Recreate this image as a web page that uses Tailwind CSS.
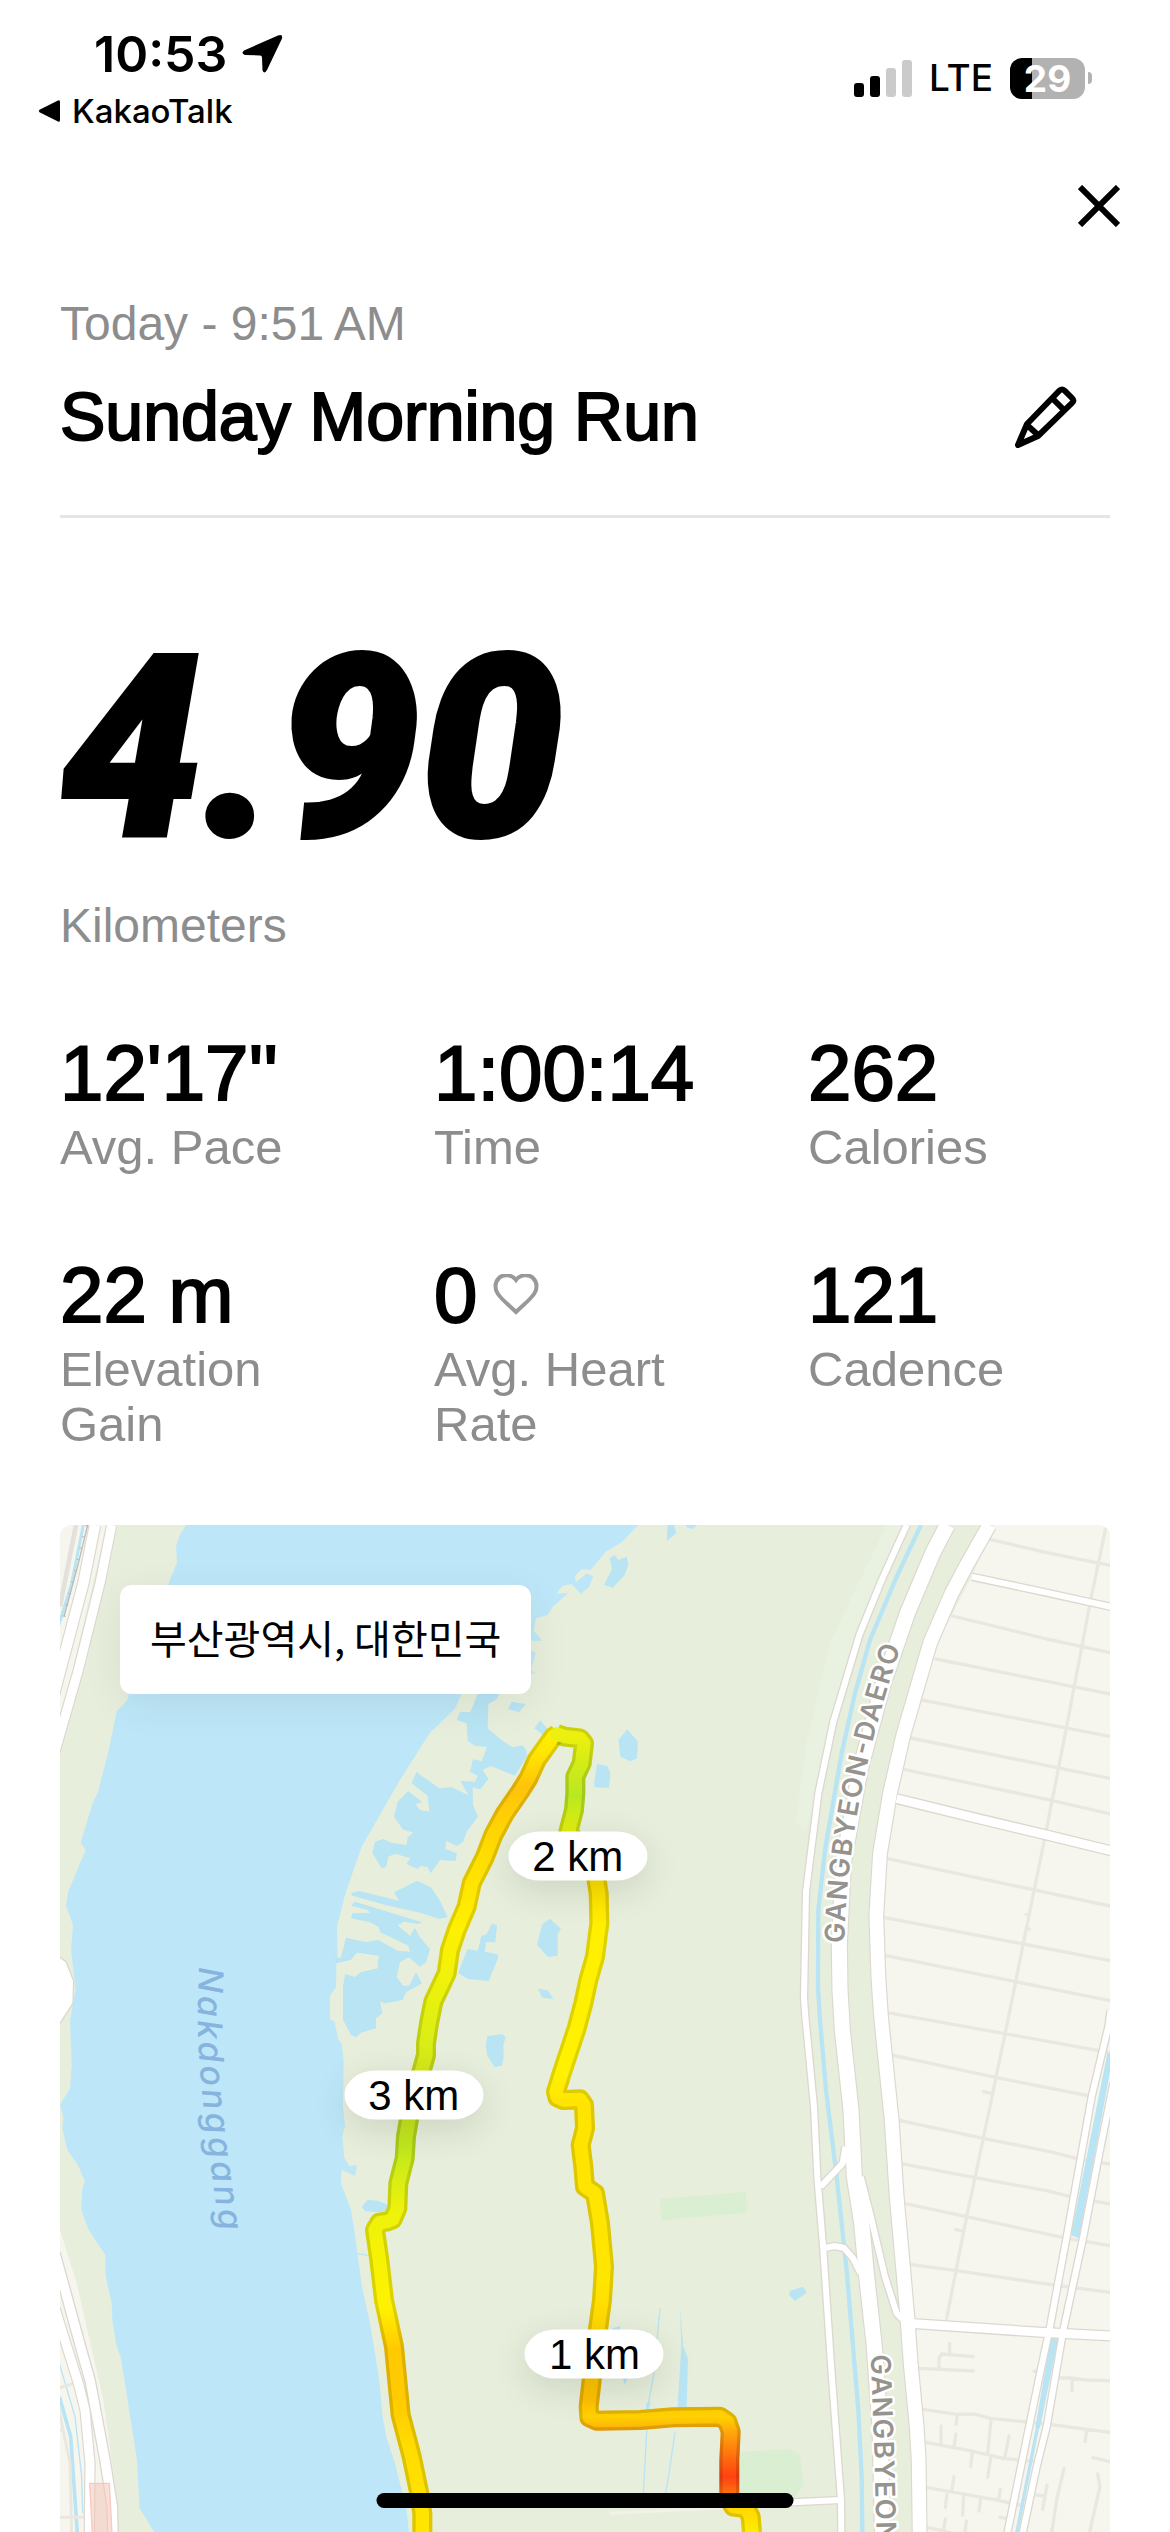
<!DOCTYPE html>
<html lang="en">
<head>
<meta charset="utf-8">
<meta name="viewport" content="width=device-width, initial-scale=1">
<title>Sunday Morning Run</title>
<script src="https://cdn.jsdelivr.net/npm/@tailwindcss/browser@4"></script>
</head>
<body class="bg-white text-black font-['Liberation_Sans',Arial,sans-serif]">
<div class="min-h-screen overflow-hidden">

  <!-- Status bar -->
  <header class="flex h-[150px] items-start justify-between pl-[38px] pr-[78px] pt-6 font-['Inter',sans-serif]">
    <div>
      <div class="flex items-center gap-[14px] pl-14">
        <span class="text-[50px] leading-[60px] font-semibold">10:53</span>
        <svg class="h-10 w-[42px]" viewBox="0 0 42 40" aria-label="Location in use"><path d="M37 1.500Q42 -.5 41 4.500L26 36Q23.500 40.500 21.500 36.500L21 23.500Q21 21.500 19 21.500L4 21Q-.5 19.500 3 16.500Z" fill="#000"/></svg>
      </div>
      <a href="#" class="mt-[7px] flex items-center gap-3 text-[33px] leading-10 font-medium">
        <svg class="h-6 w-[22px]" viewBox="0 0 22 24" aria-hidden="true"><path d="M20 1.500Q22 .5 22 3V21Q22 23.500 20 22.500L1.500 13.200Q0 12 1.500 10.800Z" fill="#000"/></svg>
        KakaoTalk
      </a>
    </div>
    <div class="mt-[33px] flex items-center gap-[17px]">
      <svg class="h-[38px] w-[58px]" viewBox="0 0 58 38" aria-label="Signal"><g fill="#000"><rect x="0" y="24" width="10" height="14" rx="3"/><rect x="16" y="17" width="10" height="21" rx="3"/></g><g fill="#cbcbcb"><rect x="32" y="9" width="10" height="29" rx="3"/><rect x="48" y="1" width="10" height="37" rx="3"/></g></svg>
      <span class="text-[37px] leading-[42px] font-medium">LTE</span>
      <div class="flex items-center gap-[3px]">
        <div class="flex h-[41px] w-[75px] items-center justify-center rounded-xl bg-linear-to-r from-black from-29% to-[#b2b2b2] to-29% text-[37px] leading-[41px] font-bold text-white">29</div>
        <div class="h-3 w-1 rounded-r-full bg-[#b2b2b2]"></div>
      </div>
    </div>
  </header>

  <div class="flex justify-end pr-[50px] pt-[35px]">
    <button type="button" aria-label="Close" class="size-[42px]">
      <svg class="size-[42px]" viewBox="0 0 42 42"><path d="M2 2L40 40M40 2L2 40" stroke="#000" stroke-width="6" fill="none"/></svg>
    </button>
  </div>

  <main class="px-[60px] pt-[69px]">
    <p class="text-[48px] leading-[55px] text-[#8d8d8d]">Today - 9:51&thinsp;AM</p>
    <div class="mt-[25px] flex items-center justify-between border-b-[3px] border-[#e5e5e5] pb-[59px] pr-[33px]">
      <h1 class="text-[68px] leading-20 [-webkit-text-stroke:2px_#000]">Sunday Morning Run</h1>
      <button type="button" aria-label="Edit title" class="size-16">
        <svg class="size-16" viewBox="0 0 64 64" fill="none" stroke="#000" stroke-width="6" stroke-linejoin="round"><path d="M46.500 6.500Q49 4.500 51.500 6.500L59 14Q61.500 16.500 59 19L25 52L5 61L14 40ZM39 14L51 26M14 41L25 51"/></svg>
      </button>
    </div>

    <section aria-label="Distance" class="mt-[130px]">
      <p class="font-['Roboto',sans-serif] text-[254px] leading-[200px] font-black italic [-webkit-text-stroke:4px_#000]">4.90</p>
      <p class="mt-[50px] text-[48px] leading-[55px] text-[#8d8d8d]">Kilometers</p>
    </section>

    <dl class="mt-20 grid grid-cols-3 gap-x-18 gap-y-20">
      <div>
        <dd class="text-[78px] leading-20 [-webkit-text-stroke:2px_#000]">12'17''</dd>
        <dt class="mt-[7px] text-[49px] leading-[55px] text-[#8d8d8d]">Avg. Pace</dt>
      </div>
      <div>
        <dd class="text-[78px] leading-20 [-webkit-text-stroke:2px_#000]">1:00:14</dd>
        <dt class="mt-[7px] text-[49px] leading-[55px] text-[#8d8d8d]">Time</dt>
      </div>
      <div>
        <dd class="text-[78px] leading-20 [-webkit-text-stroke:2px_#000]">262</dd>
        <dt class="mt-[7px] text-[49px] leading-[55px] text-[#8d8d8d]">Calories</dt>
      </div>
      <div>
        <dd class="text-[78px] leading-20 [-webkit-text-stroke:2px_#000]">22 m</dd>
        <dt class="mt-[7px] text-[49px] leading-[55px] text-[#8d8d8d]">Elevation Gain</dt>
      </div>
      <div>
        <dd class="flex items-center gap-4 text-[78px] leading-20 [-webkit-text-stroke:2px_#000]">0
          <svg class="h-[42px] w-[46px]" viewBox="0 0 46 42" aria-hidden="true"><path d="M23 6C19 0 10 0 6 4C1 9 2 16 5 20C9 26 17 32 23 38C29 32 37 26 41 20C44 16 45 9 40 4C36 0 27 0 23 6Z" fill="none" stroke="#999" stroke-width="4"/></svg>
        </dd>
        <dt class="mt-[7px] text-[49px] leading-[55px] text-[#8d8d8d]">Avg. Heart Rate</dt>
      </div>
      <div>
        <dd class="text-[78px] leading-20 [-webkit-text-stroke:2px_#000]">121</dd>
        <dt class="mt-[7px] text-[49px] leading-[55px] text-[#8d8d8d]">Cadence</dt>
      </div>
    </dl>

    <section aria-label="Route map" class="relative mt-[73px] overflow-hidden rounded-t-xl">
      <svg class="block w-full" viewBox="180 4575 3150 3021">
        <defs>
          <linearGradient id="outbound" gradientUnits="userSpaceOnUse" x1="0" y1="680" x2="0" y2="3080">
            <stop offset="0" stop-color="#ecf00e"/><stop offset=".05" stop-color="#c8ea1c"/><stop offset=".075" stop-color="#b9e81f"/><stop offset=".12" stop-color="#e6ee10"/><stop offset=".18" stop-color="#ffe000"/><stop offset=".24" stop-color="#fff000"/><stop offset=".42" stop-color="#fff200"/><stop offset=".46" stop-color="#ffe400"/><stop offset=".68" stop-color="#ffe600"/><stop offset=".75" stop-color="#ffd400"/><stop offset=".83" stop-color="#ffc000"/><stop offset=".85" stop-color="#ffd200"/><stop offset=".87" stop-color="#ffa60c"/><stop offset=".925" stop-color="#ff4210"/><stop offset=".95" stop-color="#ff7a10"/><stop offset=".965" stop-color="#ffd800"/><stop offset="1" stop-color="#fff200"/>
          </linearGradient>
          <linearGradient id="inbound" gradientUnits="userSpaceOnUse" x1="0" y1="650" x2="0" y2="3070">
            <stop offset="0" stop-color="#fff200"/><stop offset=".03" stop-color="#ffe800"/><stop offset=".075" stop-color="#ffc30a"/><stop offset=".15" stop-color="#ffdc00"/><stop offset=".25" stop-color="#fff000"/><stop offset=".32" stop-color="#eef20a"/><stop offset=".38" stop-color="#dcee14"/><stop offset=".46" stop-color="#cbe51c"/><stop offset=".52" stop-color="#c0e81f"/><stop offset=".6" stop-color="#eef20a"/><stop offset=".72" stop-color="#fff200"/><stop offset=".77" stop-color="#ffcb00"/><stop offset=".84" stop-color="#ffcc00"/><stop offset=".89" stop-color="#ffdc00"/><stop offset="1" stop-color="#ffe600"/>
          </linearGradient>
          <path id="leg-out" d="M710 672L735 680L780 685L792 700L785 760L766 800L766 850L762 900L745 965L800 1040L828 1100L836 1150L838 1240L825 1340L805 1410L790 1480L770 1555L745 1630L725 1690L708 1745L712 1762L730 1770L780 1768L792 1785L795 1855L782 1905L790 1970L795 2030L825 2050L840 2140L852 2270L846 2370L835 2450L815 2610L806 2690L808 2722L830 2732L960 2730L1060 2722L1200 2720L1222 2735L1232 2765L1228 2850L1228 2970L1240 2990L1278 2994L1292 3020L1297 3080"/>
          <path id="leg-in" d="M712 672L700 680L650 750L625 805L600 845L555 910L520 975L495 1040L455 1120L440 1190L410 1260L390 1320L380 1390L340 1475L327 1540L318 1600L318 1635L300 1700L275 1780L258 1880L254 1945L235 2020L232 2095L218 2128L200 2135L178 2138L165 2160L178 2250L192 2370L222 2510L237 2665L242 2715L275 2840L298 2950L307 3010L307 3080"/>
          <path id="daero-north" d="M433 1300C440 1000 500 700 620 360"/>
          <path id="daero-south" d="M512 2534L522 2800L545 3600"/>
          <path id="river-name" d="M477 1370C472 1500 472 1600 482 1700C494 1850 515 1990 548 2230"/>
        </defs>
        <rect x="180" y="4575" width="3150" height="3021" fill="#e7efdc"/>

        <!-- Riverside: west bank -->
        <g transform="translate(120 4530)">
          <path fill="#bde7f8" d="M438 45L418 78L408 108L411 157L385 222L300 400L266 552L262 570L230 604L205 725L174 845L157 882L122 998L137 1020L84 1146L78 1188L99 1245L93 1320L107 1440L99 1480L90 1530L95 1665L90 1735L60 1785L70 1820L67 1855L82 1920L115 1968L134 2014L126 2042L124 2100L145 2158L196 2236L197 2300L215 2380L217 2430L229 2505L243 2545L290 2845L299 2995L345 3070L1107 3070L1100 3000L1065 2860L1040 2785L1028 2720L1018 2610L990 2440L965 2325L945 2175L933 2100L903 2020L905 1980L945 1997L951 1965L928 1968L913 1943L907 1880L915 1847L909 1790L911 1650L905 1600L895 1588L883 1533L870 1528L870 1458L889 1430L889 1360L893 1343L891 1250L915 1155L965 1010L1080 810L1170 668L1245 596L1265 552L1400 540L1473 492L1486 488L1473 480L1480 455L1487 430L1473 420V392L1507 392L1481 362L1488 325L1523 315L1540 288L1585 250L1550 250L1568 228L1595 222L1622 252L1648 230L1660 198L1640 190L1608 217L1605 198L1625 178L1652 180L1697 125L1745 97L1795 45Z"/>
          <path fill="#b8e4f4" d="M889 1360L933 1350L951 1328L1016 1338L1012 1375L960 1387L945 1400L915 1392L909 1425V1530L933 1575L948 1582L963 1568L1008 1555V1525L1027 1510L1020 1475L1038 1480L1088 1470L1098 1447L1146 1420L1128 1387L1108 1427H1090L1070 1402L1080 1357L1106 1342L1140 1370L1158 1357L1170 1318L1137 1278L1125 1253L1110 1278L1073 1246L1092 1235L1135 1242L1146 1237L945 1175L933 1187L983 1200L990 1208L937 1210L933 1225L990 1237L1015 1250L1021 1267L1105 1307L1110 1325L1073 1322L1015 1290L977 1296L918 1283L903 1343L880 1343Z"/>
          <path fill="#e7efdc" d="M893 1360L933 1350L951 1328L1016 1338L1012 1375L960 1387L945 1400L915 1392L909 1425V1530L890 1545L883 1533L870 1528V1458L889 1430Z"/>
          <!-- Expressway and rail, north-west corner -->
          <path fill="#f6f6ef" d="M60 45H200L60 640Z"/>
          <g fill="none">
            <path d="M108 45L60 290" stroke="#e4e1db" stroke-width="14"/>
            <path d="M130 45L95 220L55 350" stroke="#b8e4f4" stroke-width="9"/>
            <path d="M215 45L180 220L115 480L42 735" stroke="#dcd8d0" stroke-width="34"/>
            <path d="M215 45L180 220L115 480L42 735" stroke="#fff" stroke-width="27"/>
            <path d="M165 45L130 220L40 560" stroke="#dcd8d0" stroke-width="38"/>
            <path d="M165 45L130 220L40 560" stroke="#fff" stroke-width="31"/>
            <path d="M143 45L115 160L72 320" stroke="#bdb9b3" stroke-width="4"/>
            <path d="M139 45L111 160L72 320" stroke="#bdb9b3" stroke-width="9" stroke-dasharray="3 32"/>
          </g>
          <path d="M50 1335L78 1355L101 1412L99 1480L50 1555Z" fill="#fff" stroke="#dcd8d0" stroke-width="4"/>
          <!-- Expressway, south-west corner -->
          <path fill="#f6f6ef" d="M60 2160L110 2320L190 2670L235 3000V3070H60Z"/>
          <g fill="none">
            <path d="M58 2560L105 2720L125 2900L128 3010" stroke="#b8e4f4" stroke-width="4"/>
            <path d="M58 2660L92 2780L112 3070" stroke="#b8e4f4" stroke-width="11"/>
            <path d="M55 2690L90 2860L95 3070M60 2633L103 2620M60 3022H135M55 2762L72 2758" stroke="#e9e7e0" stroke-width="9"/>
            <path d="M45 2230L130 2540L150 2610L195 2850L217 2990L219 3070" stroke="#dcd8d0" stroke-width="36"/>
            <path d="M45 2395L115 2620L135 2700L150 2860L148 3070" stroke="#dcd8d0" stroke-width="34"/>
            <path d="M45 2230L130 2540L150 2610L195 2850L217 2990L219 3070" stroke="#fff" stroke-width="28"/>
            <path d="M45 2395L115 2620L135 2700L150 2860L148 3070" stroke="#fff" stroke-width="27"/>
          </g>
          <path d="M149 2920H208L216 3070H157Z" fill="#f2c4b8" fill-opacity=".55" stroke="#f9c9c0" stroke-width="4"/>
          <text class="font-['Inter',sans-serif] font-medium italic tracking-widest" font-size="102" fill="#86b4df"><textPath href="#river-name">Nakdonggang</textPath></text>
        </g>

        <!-- Wetlands -->
        <g transform="translate(960 4530)" fill="#b8e4f4">
          <path d="M473 552L451 607L420 605L410 630L440 640L443 692L463 707L501 711L485 754L459 748L450 785L473 797L465 815L421 813L445 855L395 832L358 835L289 786L275 820L323 857L328 905L300 900L287 883L307 876L264 843L233 875L222 920L248 958L279 968L263 982L260 1005L214 998L190 987L165 995L157 1028L184 1074L198 1072L205 1040L225 1031L271 1045L259 1062L294 1077L301 1067L323 1072L332 1090L360 1050L407 1053L411 1030L376 1017L378 993L411 1008L430 995L440 965L474 920L459 885L458 833L482 838L505 806L488 780L512 768L585 797L620 740V722L608 706L578 712L545 690L503 655L505 582L530 568L537 552Z"/>
          <path d="M117 1143L237 1172L222 1147L291 1112L333 1132L360 1172L383 1222L357 1226L300 1208L200 1186L97 1157L93 1150Z"/>
          <path d="M443 1317L473 1322L484 1278L500 1273L515 1241L531 1246L526 1297L498 1297L494 1325L533 1333L534 1345L506 1413L445 1407L414 1390Z"/>
          <path d="M564 597L575 575L617 582L597 607ZM643 655L661 631L685 660L670 675ZM895 690L922 658L954 695L951 745L932 754L901 740ZM831 762L862 768L871 790L867 834L823 832V815ZM690 1226L723 1256L713 1272V1337L684 1341L651 1305L667 1243ZM654 1436L683 1441L700 1467L667 1463ZM869 145L884 135L895 150L920 140L925 163L914 195L878 233L852 224L876 178ZM1043 45H1062L1069 70L1040 93ZM1097 45H1132L1118 57L1100 52ZM502 1579L547 1572L557 1582L550 1605L551 1640L546 1667L524 1671L502 1637L497 1605ZM125 2090L142 2070L175 2072L205 2085V2108L135 2104ZM878 2455L900 2448V2470H870ZM908 2600H925L914 2624ZM1080 2395L1090 2510L1104 2545L1100 2700H1072L1084 2510Z"/>
          <path d="M1020 2395L1000 2600L985 2680L970 2950M1065 2765L1050 2870L1037 2950M112 2231L148 2237" fill="none" stroke="#b8e4f4" stroke-width="4"/>
          <path d="M978 2680L992 2672L985 2710H978Z"/>
          <path fill="#daeed2" d="M1020 2067L1277 2045L1282 2108L1080 2125L1025 2134ZM1260 2825L1412 2818L1440 2835L1451 2925L1425 2960H1260Z"/>
          <path d="M868 3010L1400 2985" stroke="#f1f1e8" stroke-width="9"/>
        </g>

        <!-- East bank: street grid, canal and riverside roads -->
        <g transform="translate(2100 4530)" fill="none" stroke-linejoin="round">
          <path fill="#e9f2e0" d="M560 45H610L470 375L350 850L318 965L287 940L320 700L390 400Z"/>
          <path fill="#f6f6ef" d="M880 45H1230V3070H665L640 2450L575 2000L550 1560L540 1200L580 860L700 420L820 190Z"/>
          <path fill="#b8e4f4" d="M270 2343L309 2330L320 2348L285 2373L267 2355Z"/>
          <g stroke="#e9e7e0" stroke-width="10" stroke-linecap="round">
            <path d="M870 88L1040 128L1230 166M758 318L1040 387L1230 428M708 447L1230 552M665 570L1230 679M632 684L1230 805M612 778L1050 870L1230 912M562 1046L1230 1188M550 1222L970 1302L1230 1352M555 1336L1230 1472M562 1508L910 1570L1230 1628M575 1635L890 1703L1170 1758M593 1830L850 1885L1050 1925L1140 1948L1230 1962M600 1960L825 2003L1040 2042L1120 2062M1180 2073L1230 2082M612 2080L800 2120L1090 2183L1230 2207M630 2263L770 2282L1060 2325L1230 2347"/>
            <path d="M1217 55L1172 270L1100 650L1035 980L970 1300L930 1500L875 1765L850 1885L800 2120L740 2425M850 1745L875 1750M767 2158L792 2164M978 1213H985M988 1257H980"/>
            <path d="M658 2575L820 2583M717 2575V2545L725 2532L820 2540M749 2530V2500M670 2698L770 2713L825 2712L870 2725L1040 2742L1230 2767M1070 2604H1110L1160 2610L1230 2612M1116 2608V2642M677 2797L810 2822L910 2845L1005 2855M873 2728L863 2830M772 2715L768 2743M723 2748V2800M768 2772L763 2805M927 2778L915 2840M817 2828L812 2870M873 2840L863 2902M1160 2760L1155 2795M1178 2843L1230 2855M678 2932L780 2950L890 2970L980 2990M762 2900L756 2940M741 2950L736 2992M791 2958L788 3015M842 2968L837 3003M901 2938L896 2968M1010 2955L1032 2958M1041 2925L1028 2998M1092 2875L1070 2970L1055 3070M1193 2892L1200 2930L1168 3070M680 3052L720 3060L760 3070M736 3027L731 3060M799 3033L795 3070M900 3022L920 3025M1002 2584H1010"/>
          </g>
          <path fill="#b8e4f4" d="M1222 1630H1240L1200 1850L1137 2185L1113 2176L1180 1840ZM1052 2485H1075L1020 2755L1006 2750Z"/>
          <path d="M1013 2750L950 3070" stroke="#b8e4f4" stroke-width="10"/>
          <path d="M663 45L590 200L510 390L465 550L425 730L375 1020L355 1200L354 1430L360 1530L378 1740L410 2000L440 2280L475 2700L485 2900L487 3070" stroke="#b8e4f4" stroke-width="13"/>
          <g stroke="#dcd8d0">
            <path stroke-width="26" d="M620 45L545 210L478 375L400 635L355 850L318 1145L312 1465L316 1520L342 1790L352 2000L370 2220L392 2550L423 2970L424 3080M815 200L1040 248L1240 292M362 2030L428 1960L436 1910M375 2214L405 2208L432 2214L458 2243L482 2290M423 2970L250 2978M482 2000L510 2110L555 2300L590 2410L610 2430M1232 1500L1225 1550L1175 1760L1100 2180L1050 2450L1020 2590L922 3070M1240 1720L1200 1920L1150 2180L1090 2460L1040 2750L1010 2870L968 3070"/>
            <path stroke-width="34" d="M590 866L830 925L1040 975L1240 1024M630 2440L1040 2468L1240 2478"/>
            <path stroke-width="52" d="M742 45L700 125L622 310L550 520L480 780L430 1060L418 1300L420 1440L427 1560L453 1800L463 2000L485 2140L500 2300L522 2500L540 2750L548 3080"/>
            <path stroke-width="48" d="M868 45L800 165L755 250L690 400L610 675L570 850L540 1030L529 1215L535 1400L543 1520L575 1830L590 2060L608 2260L622 2420L632 2560L650 2750L656 2850L659 3080"/>
          </g>
          <g stroke="#fff">
            <path stroke-width="18" d="M620 45L545 210L478 375L400 635L355 850L318 1145L312 1465L316 1520L342 1790L352 2000L370 2220L392 2550L423 2970L424 3080M815 200L1040 248L1240 292M362 2030L428 1960L436 1910M375 2214L405 2208L432 2214L458 2243L482 2290M423 2970L250 2978M482 2000L510 2110L555 2300L590 2410L610 2430M1232 1500L1225 1550L1175 1760L1100 2180L1050 2450L1020 2590L922 3070M1240 1720L1200 1920L1150 2180L1090 2460L1040 2750L1010 2870L968 3070"/>
            <path stroke-width="26" d="M590 866L830 925L1040 975L1240 1024M630 2440L1040 2468L1240 2478"/>
            <path stroke-width="45" d="M742 45L700 125L622 310L550 520L480 780L430 1060L418 1300L420 1440L427 1560L453 1800L463 2000L485 2140L500 2300L522 2500L540 2750L548 3080"/>
            <path stroke-width="41" d="M868 45L800 165L755 250L690 400L610 675L570 850L540 1030L529 1215L535 1400L543 1520L575 1830L590 2060L608 2260L622 2420L632 2560L650 2750L656 2850L659 3080"/>
          </g>
          <g class="font-['Inter',sans-serif] font-semibold tracking-wider" font-size="82" fill="#96938f" stroke="#fff" stroke-width="14" paint-order="stroke">
            <text><textPath href="#daero-north">GANGBYEON-DAERO</textPath></text>
            <text><textPath href="#daero-south">GANGBYEON-DAERO</textPath></text>
          </g>
        </g>

        <!-- Run route, coloured by pace -->
        <g transform="translate(960 4530)" fill="none" stroke-linejoin="round">
          <g stroke-width="60">
            <use href="#leg-in" stroke="url(#inbound)"/><use href="#leg-out" stroke="url(#outbound)"/>
          </g>
          <g stroke="#000" stroke-opacity=".13" stroke-width="60">
            <use href="#leg-in"/><use href="#leg-out"/>
          </g>
          <g stroke-width="40" stroke-linecap="round">
            <use href="#leg-in" stroke="url(#inbound)"/><use href="#leg-out" stroke="url(#outbound)"/>
          </g>
        </g>
      </svg>

      <div class="absolute left-[60px] top-[60px] rounded-xl bg-white px-[30px] pt-[25px] pb-[29px] font-['Noto_Sans_CJK_KR',sans-serif] text-[40px] leading-[55px] shadow-[0_10px_40px_rgba(0,0,0,0.07)]">부산광역시, 대한민국</div>
      <div class="absolute left-[49.3%] top-[32.9%] -translate-x-1/2 -translate-y-1/2 rounded-[32px/25px] bg-white px-6 text-[42px] leading-[49px] shadow-[0_10px_36px_rgba(0,0,0,0.12)]">2 km</div>
      <div class="absolute left-[33.7%] top-[56.6%] -translate-x-1/2 -translate-y-1/2 rounded-[32px/25px] bg-white px-6 text-[42px] leading-[49px] shadow-[0_10px_36px_rgba(0,0,0,0.12)]">3 km</div>
      <div class="absolute left-[50.9%] top-[82.3%] -translate-x-1/2 -translate-y-1/2 rounded-[32px/25px] bg-white px-6 text-[42px] leading-[49px] shadow-[0_10px_36px_rgba(0,0,0,0.12)]">1 km</div>
    </section>
  </main>
</div>

<!-- Home indicator -->
<div class="fixed bottom-6 left-1/2 h-[15px] w-[417px] -translate-x-1/2 rounded-full bg-black"></div>
</body>
</html>
